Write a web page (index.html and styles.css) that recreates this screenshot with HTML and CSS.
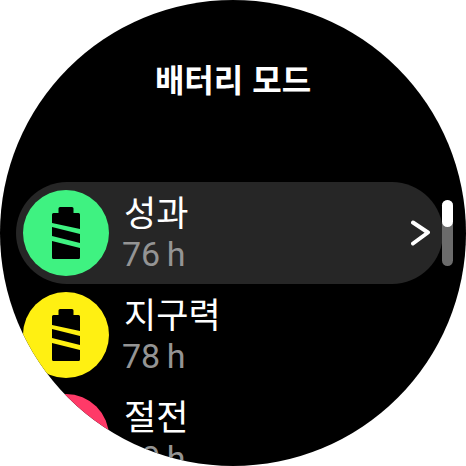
FILE: index.html
```html
<!DOCTYPE html>
<html lang="ko">
<head>
<meta charset="utf-8">
<title>배터리 모드</title>
<link rel="stylesheet" href="styles.css">
</head>
<body>
<main class="screen">
  <h1 class="title">배터리 모드</h1>
  <ul class="list">
    <li class="row row-active">
      <span class="badge badge-green">
        <svg class="battery" viewBox="0 0 28 52"><path d="M8 0h12a1.500 1.500 0 0 1 1.500 1.500V6h5A1.500 1.500 0 0 1 28 7.500V22L0 16V7.500A1.500 1.500 0 0 1 1.500 6h5V1.500A1.500 1.500 0 0 1 8 0z"/><path d="M0 20L28 27V36L0 29z"/><path d="M0 34L28 41V50.500A1.500 1.500 0 0 1 26.500 52H1.500A1.500 1.500 0 0 1 0 50.500z"/></svg>
      </span>
      <span class="text"><span class="name">성과</span><span class="hours">76 h</span></span>
      <svg class="chevron" viewBox="0 0 20 26"><path d="M2 2.500L17 12.500L2 23.500"/></svg>
    </li>
    <li class="row">
      <span class="badge badge-yellow">
        <svg class="battery" viewBox="0 0 28 52"><path d="M8 0h12a1.500 1.500 0 0 1 1.500 1.500V6h5A1.500 1.500 0 0 1 28 7.500V22L0 16V7.500A1.500 1.500 0 0 1 1.500 6h5V1.500A1.500 1.500 0 0 1 8 0z"/><path d="M0 20L28 27V36L0 29z"/><path d="M0 34L28 41V50.500A1.500 1.500 0 0 1 26.500 52H1.500A1.500 1.500 0 0 1 0 50.500z"/></svg>
      </span>
      <span class="text"><span class="name">지구력</span><span class="hours">78 h</span></span>
    </li>
    <li class="row">
      <span class="badge badge-red"></span>
      <span class="text"><span class="name">절전</span><span class="hours">90 h</span></span>
    </li>
  </ul>
  <div class="scrollbar"><div class="thumb"></div></div>
</main>
</body>
</html>
```
FILE: styles.css
```css
* { box-sizing: border-box; }
html, body { margin: 0; padding: 0; background: #fff; }
body { width: 466px; height: 466px; overflow: hidden; }
.screen {
  position: relative;
  width: 466px;
  height: 466px;
  border-radius: 50%;
  background: #000;
  overflow: hidden;
  font-family: "Noto Sans CJK KR", "Roboto", sans-serif;
  color: #fff;
}
.title {
  margin: 0;
  height: 182px;
  padding-top: 56px;
  text-align: center;
  font-size: 32px;
  line-height: 44px;
  font-weight: 700;
}
.list { margin: 0; padding: 0 0 0 16px; list-style: none; }
.row {
  display: flex;
  align-items: center;
  width: 427px;
  height: 102px;
  padding: 0 12px 0 7px;
  border-radius: 51px;
}
.row-active { background: #262626; }
.badge {
  flex: none;
  display: flex;
  align-items: center;
  justify-content: center;
  width: 86px;
  height: 86px;
  border-radius: 50%;
}
.badge-green { background: #3ff281; }
.badge-yellow { background: #fff012; }
.badge-red { background: #ff3a68; }
.battery { width: 28px; height: 52px; fill: #000; }
.text { flex: 1; display: flex; flex-direction: column; margin-left: 15px; }
.name { font-size: 35px; line-height: 46px; height: 46px; margin-top: -4px; }
.hours {
  margin-left: -2px;
  font-family: "Roboto", "Noto Sans CJK KR", sans-serif;
  font-size: 34px;
  line-height: 40px;
  word-spacing: -2px;
  color: #949494;
}
.chevron { flex: none; width: 20px; height: 26px; fill: none; stroke: #fff; stroke-width: 4px; stroke-linecap: round; stroke-linejoin: round; }
.scrollbar {
  position: absolute;
  left: 442px;
  top: 200px;
  width: 11px;
  height: 66px;
  border-radius: 6px;
  background: #6b6b6b;
}
.thumb { height: 27px; border-radius: 6px; background: #fff; }
```
